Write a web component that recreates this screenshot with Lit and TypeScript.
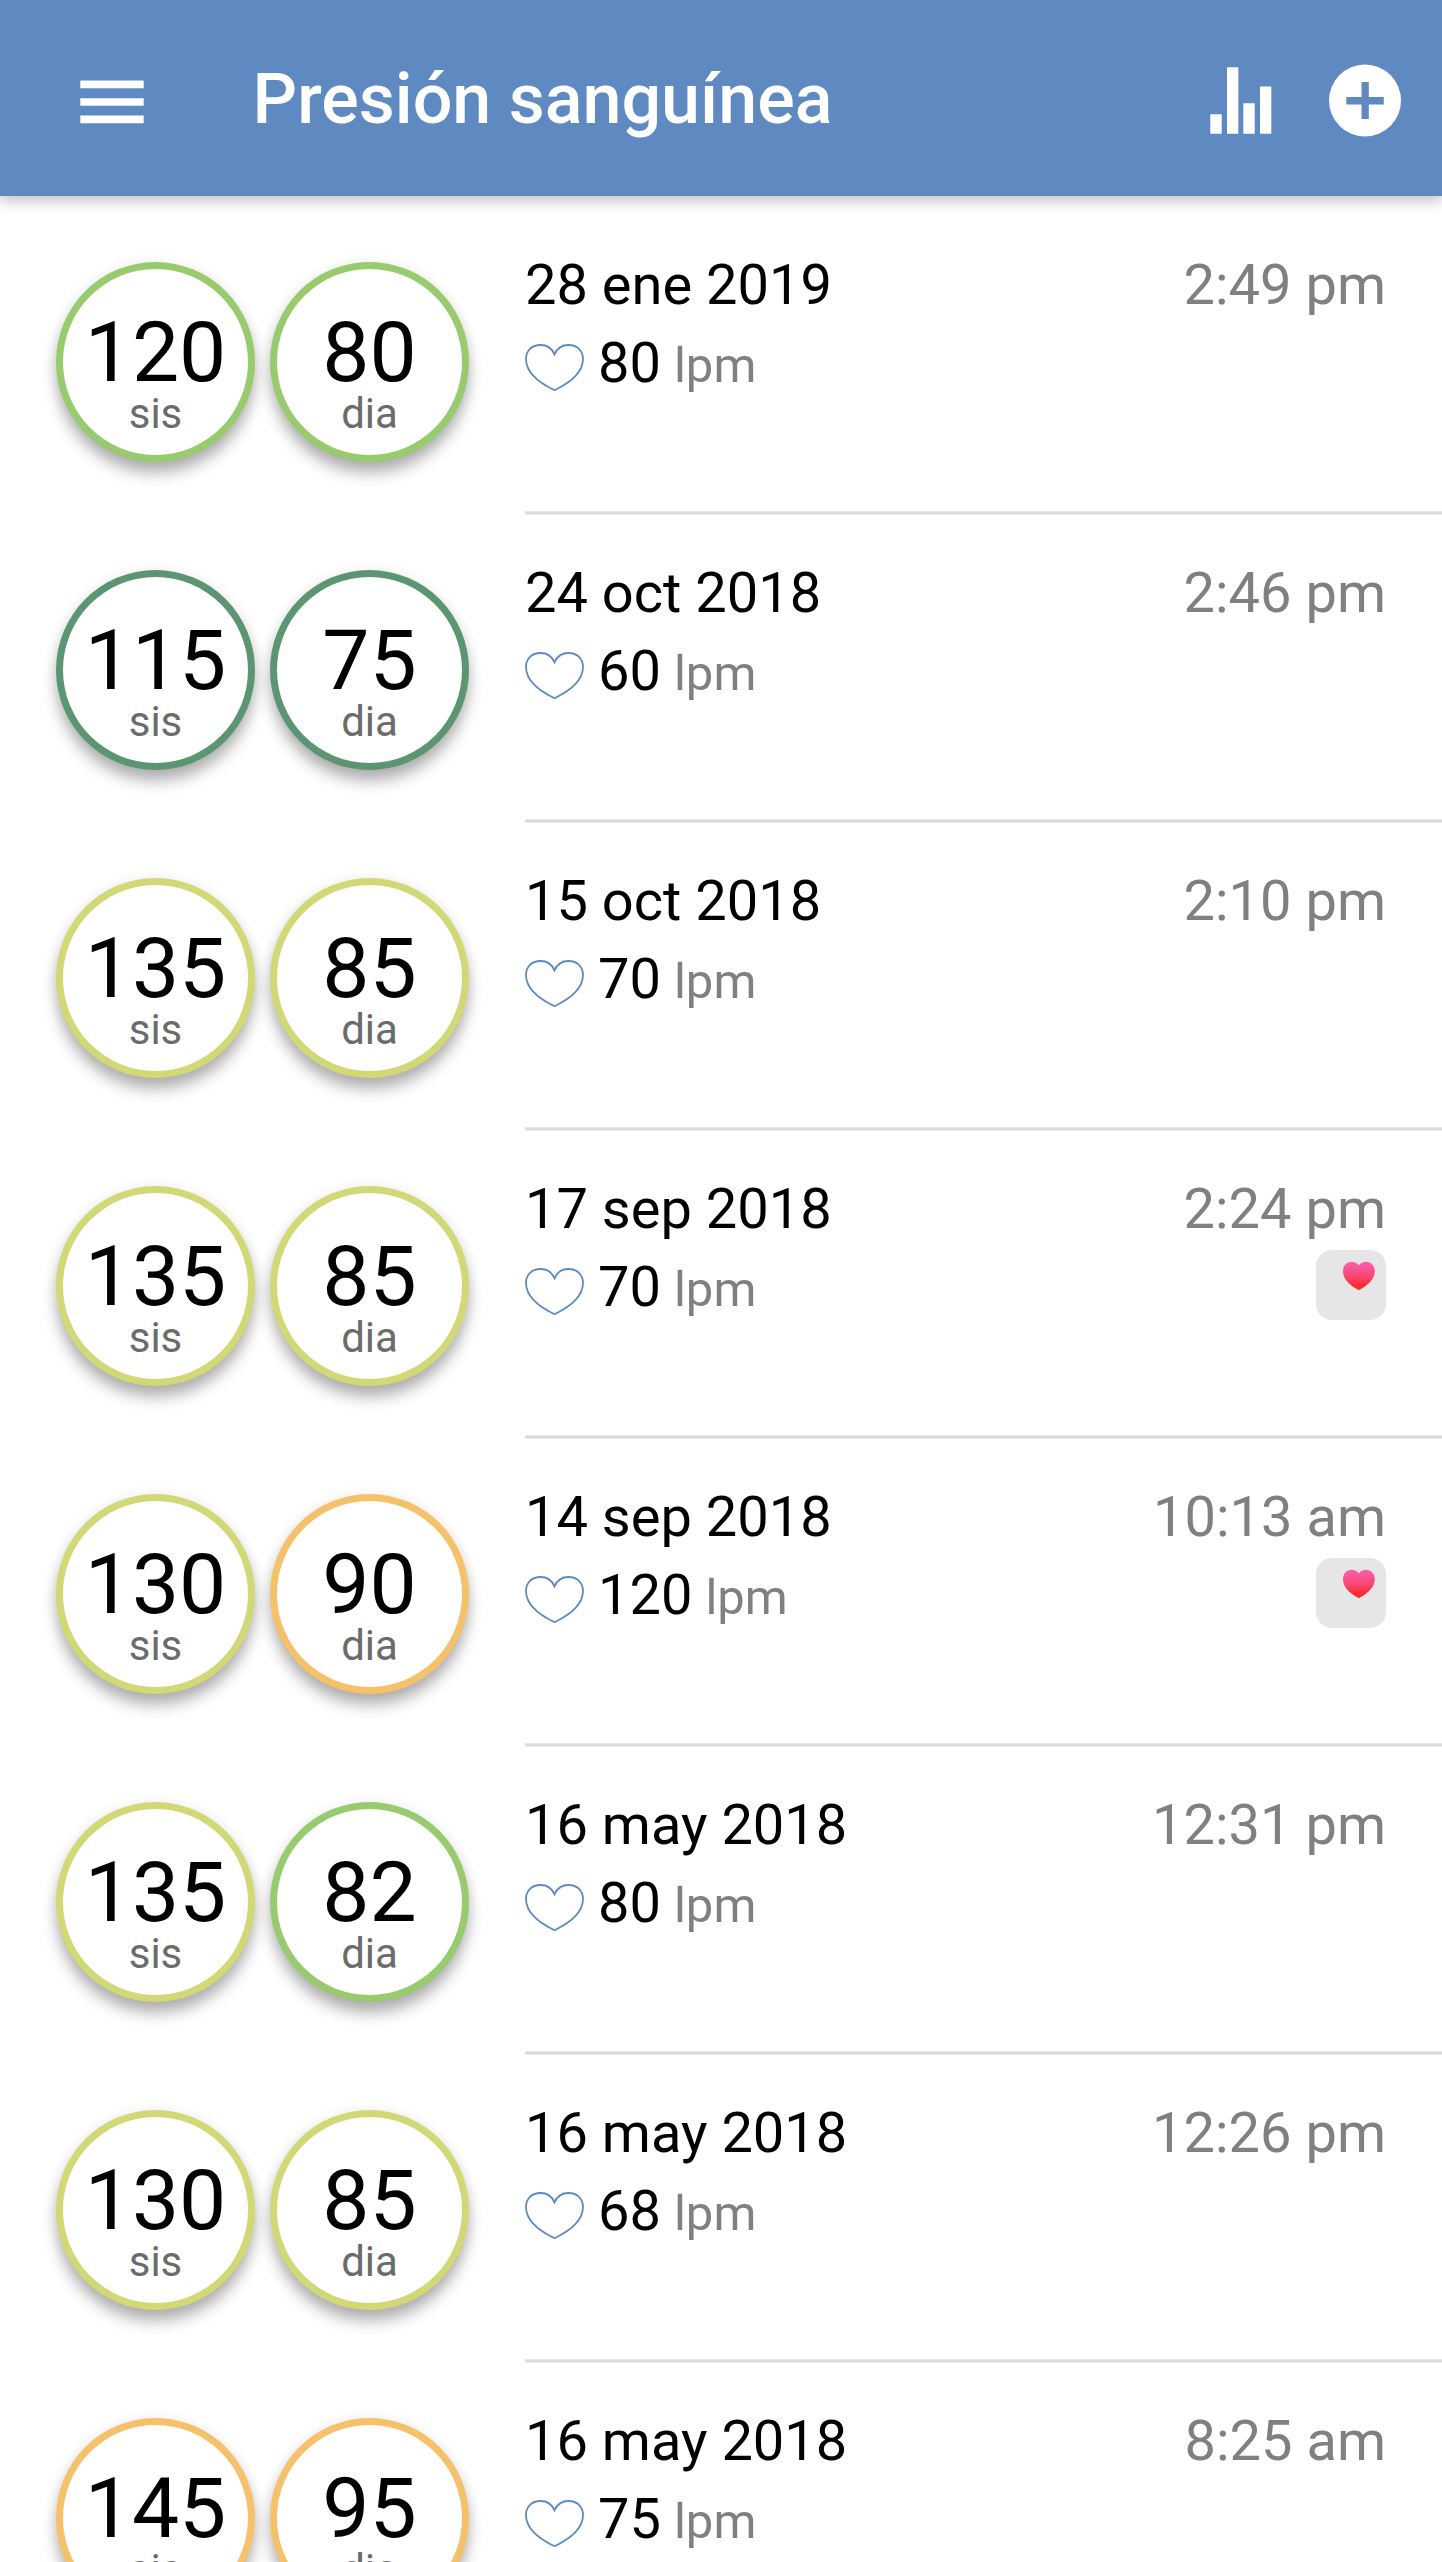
import { LitElement, html, css, svg, nothing } from "lit";
import { customElement, property } from "lit/decorators.js";
import { classMap } from "lit/directives/class-map.js";

type Level = "optimal" | "normal" | "elevated" | "high";

interface Reading {
  sis: number;
  sisLevel: Level;
  dia: number;
  diaLevel: Level;
  date: string;
  time: string;
  pulse: number;
  synced?: boolean;
}

const READINGS: Reading[] = [
  { sis: 120, sisLevel: "normal", dia: 80, diaLevel: "normal", date: "28 ene 2019", time: "2:49 pm", pulse: 80 },
  { sis: 115, sisLevel: "optimal", dia: 75, diaLevel: "optimal", date: "24 oct 2018", time: "2:46 pm", pulse: 60 },
  { sis: 135, sisLevel: "elevated", dia: 85, diaLevel: "elevated", date: "15 oct 2018", time: "2:10 pm", pulse: 70 },
  { sis: 135, sisLevel: "elevated", dia: 85, diaLevel: "elevated", date: "17 sep 2018", time: "2:24 pm", pulse: 70, synced: true },
  { sis: 130, sisLevel: "elevated", dia: 90, diaLevel: "high", date: "14 sep 2018", time: "10:13 am", pulse: 120, synced: true },
  { sis: 135, sisLevel: "elevated", dia: 82, diaLevel: "normal", date: "16 may 2018", time: "12:31 pm", pulse: 80 },
  { sis: 130, sisLevel: "elevated", dia: 85, diaLevel: "elevated", date: "16 may 2018", time: "12:26 pm", pulse: 68 },
  { sis: 145, sisLevel: "high", dia: 95, diaLevel: "high", date: "16 may 2018", time: "8:25 am", pulse: 75 },
];

const HEART = svg`<path d="M29.5 10.3C26.8 4.2 21.8 1 15.6 1C6.8 1 1 6.6 1 15C1 27.5 13 38.3 29.5 46.2C46 38.3 58 27.5 58 15C58 6.6 52.2 1 43.4 1C37.2 1 32.2 4.2 29.5 10.3Z" fill="none" stroke="#5f8ac1" stroke-width="1.8"/>`;

@customElement("pressure-ring")
export class PressureRing extends LitElement {
  static styles = css`
    :host { display: block; }
    .ring {
      box-sizing: border-box;
      width: 199px;
      height: 200px;
      border: 7px solid;
      border-radius: 50%;
      background: #fff;
      box-shadow: 0 12px 15px -1px rgba(0, 0, 0, 0.3), 0 0 14px rgba(0, 0, 0, 0.07);
      display: flex;
      flex-direction: column;
      align-items: center;
      padding-top: 42px;
    }
    .optimal { border-color: #5b9572; }
    .normal { border-color: #98ca6e; }
    .elevated { border-color: #d2d876; }
    .high { border-color: #f5c16a; }
    .value { font-size: 84px; line-height: 84px; color: #000; }
    .label { font-size: 42px; line-height: 36px; margin-top: 1px; color: #6b6b6b; }
  `;
  @property({ type: Number }) value = 0;
  @property() label = "";
  @property() level: Level = "normal";

  render() {
    return html`<div class=${classMap({ ring: true, [this.level]: true })}>
      <span class="value">${this.value}</span>
      <span class="label">${this.label}</span>
    </div>`;
  }
}

@customElement("app-root")
export class AppRoot extends LitElement {
  static styles = css`
    :host {
      display: block;
      height: 2562px;
      overflow: hidden;
      background: #fff;
      font-family: Roboto, "Liberation Sans", sans-serif;
      font-weight: 400;
    }
    .bar {
      box-sizing: border-box;
      height: 196px;
      padding: 0 40px 0 80px;
      display: flex;
      align-items: center;
      background: #5f8ac1;
      box-shadow: 0 3px 14px 1px rgba(0, 0, 0, 0.27);
      color: #fff;
    }
    svg { display: block; flex: none; }
    .title {
      margin: 2px 0 0 108.5px;
      flex: 1;
      font-size: 70px;
      line-height: 82px;
      font-weight: 500;
    }
    .chart { margin-right: 56px; }
    .row {
      box-sizing: border-box;
      height: 308px;
      display: grid;
      grid-template-columns: 469px 1fr;
      column-gap: 56px;
    }
    .first-gap { height: 10px; }
    .rings {
      display: flex;
      gap: 15px;
      padding: 56px 0 0 56px;
    }
    .body {
      box-sizing: border-box;
      height: 309px;
      padding: 46px 56px 0 0;
      background: linear-gradient(#e8e8e8 0 1px, #dcdcdc 1px 3px, #ececec 3px) bottom / 100% 4px no-repeat;
      display: flex;
      justify-content: space-between;
    }
    .info { display: flex; flex-direction: column; }
    .date { font-size: 56px; line-height: 66px; }
    .pulse {
      display: flex;
      align-items: baseline;
      margin-top: 12px;
      font-size: 56px;
      line-height: 66px;
    }
    .heart { width: 59px; height: 48px; margin-right: 14px; align-self: flex-start; margin-top: 14px; }
    .unit { font-size: 49px; color: #808080; margin-left: 13px; }
    .meta { display: flex; flex-direction: column; align-items: flex-end; }
    .time { font-size: 56px; line-height: 66px; color: #808080; }
    .badge { margin-top: 7.5px; }
  `;

  private badge() {
    return html`<svg class="badge" width="70" height="70" viewBox="0 0 70 70">
      <defs>
        <linearGradient id="pulseFill" x1="0" y1="0" x2="0" y2="1">
          <stop offset="0" stop-color="#f661ac" />
          <stop offset="0.5" stop-color="#fa4777" />
          <stop offset="0.85" stop-color="#fc2a30" />
          <stop offset="1" stop-color="#fd2d2b" />
        </linearGradient>
      </defs>
      <rect width="70" height="70" rx="16" fill="#e6e6e6" />
      <path d="M42.8 15.2C41 13 38.7 11.8 35.7 11.8C30.6 11.8 27 15.8 27 21.3C27 29 33.4 35.2 42.8 40.2C52.3 35.2 58.8 29 58.8 21.3C58.8 15.8 55 11.8 50 11.8C47 11.8 44.7 13 42.8 15.2Z" fill="url(#pulseFill)" />
    </svg>`;
  }

  private row(r: Reading) {
    return html`<article class="row">
      <div class="rings">
        <pressure-ring .value=${r.sis} .level=${r.sisLevel} label="sis"></pressure-ring>
        <pressure-ring .value=${r.dia} .level=${r.diaLevel} label="dia"></pressure-ring>
      </div>
      <div class="body">
        <div class="info">
          <span class="date">${r.date}</span>
          <div class="pulse">
            <svg class="heart" viewBox="0 0 59 48">${HEART}</svg>
            <span>${r.pulse}</span><span class="unit">lpm</span>
          </div>
        </div>
        <div class="meta">
          <span class="time">${r.time}</span>
          ${r.synced ? this.badge() : nothing}
        </div>
      </div>
    </article>`;
  }

  render() {
    return html`
      <header class="bar">
        <svg width="64" height="44" viewBox="0 0 64 44" transform="translate(0 4)">
          <path d="M.3 .5H63.7V8.2H.3ZM.3 18.2H63.7V25.8H.3ZM.3 35.6H63.7V43.3H.3Z" fill="#fff" />
        </svg>
        <h1 class="title">Presión sanguínea</h1>
        <svg class="chart" width="62" height="68" viewBox="0 0 62 68" transform="translate(0 3)">
          <path d="M.3 47.3H11.7V66.7H.3ZM17 .3H28.3V66.7H17ZM33.3 36.3H44.7V66.7H33.3ZM50 19.6H61.3V66.7H50Z" fill="#fff" />
        </svg>
        <svg width="74" height="74" viewBox="0 0 74 74" transform="translate(0 3)">
          <circle cx="37" cy="36.5" r="36" fill="#fff" />
          <path d="M33.5 18H40.8V33H55.8V40.5H40.8V55H33.5V40.5H18.3V33H33.5Z" fill="#5f8ac1" />
        </svg>
      </header>
      <div class="first-gap"></div>
      ${READINGS.map((r) => this.row(r))}
    `;
  }
}
